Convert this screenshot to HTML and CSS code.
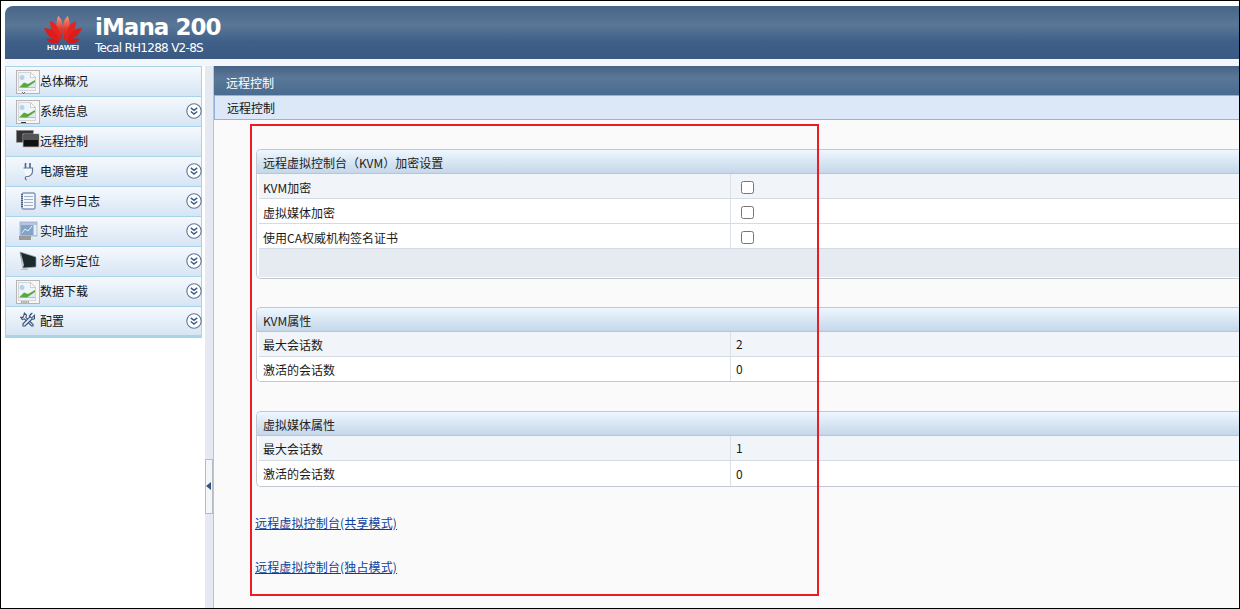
FILE: index.html
```html
<!DOCTYPE html>
<html lang="zh">
<head>
<meta charset="utf-8">
<title>iMana 200</title>
<link rel="stylesheet" href="styles.css">
</head>
<body>
<svg class="defs" width="0" height="0" aria-hidden="true">
  <defs>
    <linearGradient id="petal" x1="0" y1="0" x2="0" y2="1">
      <stop offset="0" stop-color="#f29a80"/>
      <stop offset=".55" stop-color="#e6362c"/>
      <stop offset="1" stop-color="#d9161a"/>
    </linearGradient>
  </defs>
  <symbol id="broken" viewBox="0 0 24 24">
    <rect x="0.5" y="0.5" width="23" height="23" fill="#f6f6f6" stroke="#b5b5b5"/>
    <path d="M2.500 2.500h12l5 5v13h-17z" fill="#eef4fb" stroke="#c4c8cc" stroke-width=".7"/>
    <path d="M14.500 2.500v5h5z" fill="#fff" stroke="#bbb" stroke-width=".7"/>
    <path d="M3 17.500l5-5 4 1.500 7-4v8z" fill="#5ca83a"/>
    <path d="M6 10a2.500 2.500 0 1 1 .1 0z" fill="#b8d0ec"/>
    <path d="M11 17.500l8-5.500v5.500z" fill="#dfe8ef"/>
  </symbol>
  <symbol id="chev" viewBox="0 0 16 16">
    <circle cx="8" cy="8" r="7.200" fill="#fff" stroke="#5d7699" stroke-width="1.100"/>
    <path d="M4.800 4.800L8 7.300l3.200-2.500M4.800 8.500L8 11l3.200-2.500" fill="none" stroke="#3d5a82" stroke-width="1.500"/>
  </symbol>
</svg>
<div class="frame">
  <header class="top">
    <svg class="logo" viewBox="0 0 40 37" width="40" height="37" aria-hidden="true">
      <g>
        <path d="M19 25C13 18 12 11 15 1c3 2 5 6 4.800 12-.1 4-.4 8-.8 12z" fill="url(#petal)"/>
        <path d="M18 25.500C12 22 7 16 7 6c4 1 7 4 8.500 9 1 3 2 7 2.500 10.500z" fill="#e3241f"/>
        <path d="M17 26C10 25.500 4 21 1 13c5 0 9 2 12 6 1.500 2 3 5 4 7z" fill="#dd1c1c"/>
        <path d="M16.500 27C11 30 6 28 3 24c5-1 10 0 13.500 3z" fill="#d9161a"/>
      </g>
      <g transform="translate(40 0) scale(-1 1)">
        <path d="M19 25C13 18 12 11 15 1c3 2 5 6 4.800 12-.1 4-.4 8-.8 12z" fill="url(#petal)"/>
        <path d="M18 25.500C12 22 7 16 7 6c4 1 7 4 8.500 9 1 3 2 7 2.500 10.500z" fill="#e3241f"/>
        <path d="M17 26C10 25.500 4 21 1 13c5 0 9 2 12 6 1.500 2 3 5 4 7z" fill="#dd1c1c"/>
        <path d="M16.500 27C11 30 6 28 3 24c5-1 10 0 13.500 3z" fill="#d9161a"/>
      </g>
      <text x="20" y="35" class="logo-text" text-anchor="middle">HUAWEI</text>
    </svg>
    <div class="brand">
      <h1 class="brand-name">iMana 200</h1>
      <p class="brand-model">Tecal RH1288 V2-8S</p>
    </div>
  </header>
  <div class="main">
    <nav class="side">
      <a class="nav-item"><span class="ico"><svg class="ico-svg" viewBox="0 0 24 24"><use href="#broken"/><path d="M6 22l1.500 1.500L9 22" fill="none" stroke="#444" stroke-width=".8"/></svg></span><span class="nav-text">总体概况</span></a>
      <a class="nav-item"><span class="ico"><svg class="ico-svg" viewBox="0 0 24 24"><use href="#broken"/><path d="M5 22.500h5" fill="none" stroke="#333"/></svg></span><span class="nav-text">系统信息</span><svg class="chev"><use href="#chev"/></svg></a>
      <a class="nav-item"><span class="ico"><svg class="ico-svg" viewBox="0 0 24 24"><rect x=".3" y=".3" width="17" height="12" fill="#333" stroke="#999" stroke-width=".6"/><rect x="7" y="4" width="16" height="13" fill="#111" stroke="#bbb" stroke-width=".8"/><path d="M8 5h14v5H8z" fill="#555"/><path d="M11 18h8l2 3H9z" fill="#e4e6ee"/></svg></span><span class="nav-text">远程控制</span></a>
      <a class="nav-item"><span class="ico"><svg class="ico-svg" viewBox="0 0 24 24"><path d="M9.500 3v5M14 3v5" fill="none" stroke="#4b6588" stroke-width="1.600"/><path d="M7.500 8h9v3.500c0 3-3 5-5 5h-.5c-1.200 0-1.800 1-1.800 1.800s.6 1.500 1.600 1.700" fill="#f4f7fb" stroke="#5d7699" stroke-width="1.200"/></svg></span><span class="nav-text">电源管理</span><svg class="chev"><use href="#chev"/></svg></a>
      <a class="nav-item"><span class="ico"><svg class="ico-svg" viewBox="0 0 24 24"><rect x="6" y="3" width="13" height="16" rx="1" fill="#f4f7fb" stroke="#4e6c92"/><path d="M8 6.500h9M8 9.500h9M8 12.500h9M8 15.500h9" stroke="#9fb1c8"/><path d="M6 4v14" stroke="#2f4a6e" stroke-width="1.600" stroke-dasharray="1 1"/></svg></span><span class="nav-text">事件与日志</span><svg class="chev"><use href="#chev"/></svg></a>
      <a class="nav-item"><span class="ico"><svg class="ico-svg" viewBox="0 0 24 24"><rect x="4" y="2" width="17" height="14" fill="#b9c4de" stroke="#8f9dbb" stroke-width=".6"/><rect x="5" y="5" width="12" height="10" fill="#7fa4c8"/><path d="M6 13l3-4 3 2 4-5" fill="none" stroke="#e8f0f8"/><path d="M3 16h12v4H3z" fill="#9a9a9a"/><rect x="18" y="5" width="2.500" height="10" fill="#e8eef8"/></svg></span><span class="nav-text">实时监控</span><svg class="chev"><use href="#chev"/></svg></a>
      <a class="nav-item"><span class="ico"><svg class="ico-svg" viewBox="0 0 24 24"><path d="M4 2l16 5v10l-13 1z" fill="#1d2a2c" stroke="#9aa6ae" stroke-width=".7"/><path d="M5 3l3 12-2 4z" fill="#bcc6cc"/><path d="M5 19l6-1 1 2H5z" fill="#b9c0c6"/></svg></span><span class="nav-text">诊断与定位</span><svg class="chev"><use href="#chev"/></svg></a>
      <a class="nav-item"><span class="ico"><svg class="ico-svg" viewBox="0 0 24 24"><use href="#broken"/><path d="M5 22h8" fill="none" stroke="#555" stroke-width="1.200" stroke-dasharray="1.500 .7"/></svg></span><span class="nav-text">数据下载</span><svg class="chev"><use href="#chev"/></svg></a>
      <a class="nav-item nav-last"><span class="ico"><svg class="ico-svg" viewBox="0 0 24 24"><g transform="translate(12 10.500) scale(.72) translate(-12 -12)"><path d="M7 3l3 3-1 3 10 10v2h-2L7 11l-3 1-2-3h3l1-2z" fill="#f2f5fa" stroke="#34527a" stroke-width="1.500"/><path d="M18 3l-4 4 3 3 4-4v5l-4 1-9 9H5v-3l9-9 1-4z" fill="#dfe6f0" stroke="#34527a" stroke-width="1.500"/></g></svg></span><span class="nav-text">配置</span><svg class="chev"><use href="#chev"/></svg></a>
    </nav>
    <div class="splitter"><span class="handle"><span class="arrow"></span></span></div>
    <section class="content">
      <div class="title-bar">远程控制</div>
      <div class="crumb">远程控制</div>
      <div class="body">
        <div class="panel panel-first">
          <div class="panel-head">远程虚拟控制台（KVM）加密设置</div>
          <div class="row"><span class="label">KVM加密</span><span class="value"><span class="check"></span></span></div>
          <div class="row"><span class="label">虚拟媒体加密</span><span class="value"><span class="check"></span></span></div>
          <div class="row"><span class="label">使用CA权威机构签名证书</span><span class="value"><span class="check"></span></span></div>
          <div class="panel-foot"></div>
        </div>
        <div class="panel panel-kvm">
          <div class="panel-head">KVM属性</div>
          <div class="row"><span class="label">最大会话数</span><span class="value">2</span></div>
          <div class="row"><span class="label">激活的会话数</span><span class="value">0</span></div>
        </div>
        <div class="panel panel-media">
          <div class="panel-head">虚拟媒体属性</div>
          <div class="row"><span class="label">最大会话数</span><span class="value">1</span></div>
          <div class="row"><span class="label">激活的会话数</span><span class="value">0</span></div>
        </div>
        <p class="link-line link-first"><a href="#">远程虚拟控制台(共享模式)</a></p>
        <p class="link-line link-second"><a href="#">远程虚拟控制台(独占模式)</a></p>
      </div>
    </section>
  </div>
  <div class="redbox"></div>
</div>
</body>
</html>
```
FILE: styles.css
```css
* { box-sizing: border-box; }
html, body { margin: 0; padding: 0; }
body {
  width: 1240px;
  height: 609px;
  overflow: hidden;
  font-family: "Noto Sans CJK SC", "Noto Sans", sans-serif;
  font-size: 12px;
  color: #1a1a1a;
  background: #fff;
}
.defs { position: absolute; }
.frame {
  position: relative;
  width: 1240px;
  height: 609px;
  border: 1px solid #000;
  padding: 5px 0 0 4px;
  background: #fff;
  display: flex;
  flex-direction: column;
}
.top {
  height: 53px;
  flex: none;
  border-top-left-radius: 8px;
  background: linear-gradient(#486487 0, #5a7797 36%, #3e5f88 68%, #3a5a83 100%);
  display: flex;
  align-items: flex-start;
  padding: 8px 0 0 38px;
}
.logo { display: block; margin-top: 1px; flex: none; }
.logo-text { font: bold 8px "Liberation Sans", sans-serif; fill: #fff; }
.brand { margin-left: 12px; color: #fff; }
.brand-name {
  margin: 0;
  font: bold 23px/26px "DejaVu Sans", sans-serif;
  letter-spacing: -.95px;
  color: #fff;
}
.brand-model {
  margin: 1px 0 0;
  font: 12px/14px "DejaVu Sans", sans-serif;
  letter-spacing: -.72px;
  color: #fff;
}
.main {
  flex: 1;
  min-height: 0;
  padding-top: 7px;
  display: flex;
  background: #f3f6fb;
}
.side { width: 197px; flex: none; background: #fff; align-self: stretch; }
.nav-item {
  display: flex;
  align-items: center;
  height: 30px;
  border: 1px solid #a9d3e9;
  border-bottom: 0;
  background: linear-gradient(#f6f9fd, #d6e5f4);
  position: relative;
  color: #111;
}
.nav-last { border-bottom: 3px solid #a9d3e9; height: 32px; }
.ico { width: 24px; height: 24px; margin-left: 10px; flex: none; display: block; }
.ico-svg { display: block; width: 24px; height: 24px; }
.nav-text { margin-top: -2px; line-height: 16px; }
.nav-last .nav-text { margin-top: 0; }
.chev { position: absolute; right: -1px; top: 6px; width: 16px; height: 16px; }
.splitter {
  width: 12px;
  flex: none;
  position: relative;
  background: linear-gradient(90deg, #fff 0, #fff 3px, #e4e9f2 3px, #e4e9f2 11px, #b9c4d3 11px);
}
.handle {
  position: absolute;
  left: 3px;
  top: 393px;
  width: 8px;
  height: 55px;
  background: #f3f5f9;
  border: 1px solid #b6bcc5;
}
.arrow {
  position: absolute;
  left: 0;
  top: 22px;
  border: 4px solid transparent;
  border-left-width: 0;
  border-right: 5px solid #33557f;
}
.content { flex: 1; min-width: 0; background: #fafafa; display: flex; flex-direction: column; }
.title-bar {
  height: 29px;
  flex: none;
  color: #fff;
  padding: 9px 0 0 12px;
  line-height: 16px;
  background: linear-gradient(#466385, #5a7797 40%, #4a6b90);
}
.crumb {
  height: 25px;
  flex: none;
  background: #dce8f8;
  border: 1px solid #93b2dc;
  border-right: 0;
  padding: 4px 0 0 12px;
  line-height: 16px;
  color: #111;
}
.body { flex: 1; min-height: 0; padding: 29px 0 0 42px; }
.panel {
  background: #fff;
  border: 1px solid #c2c8cf;
  border-right: 0;
  border-radius: 5px 0 0 5px;
}
.panel-kvm { margin-top: 28px; }
.panel-media { margin-top: 29px; }
.panel-head {
  height: 24px;
  padding: 5px 0 0 6px;
  line-height: 16px;
  background: linear-gradient(#eef7ff, #c4d7e9);
  border-bottom: 1px solid #b4c6da;
  border-radius: 4px 0 0 0;
  color: #222;
}
.row {
  display: flex;
  height: 25px;
  margin-left: 2px;
  border-bottom: 1px solid #d3dbe5;
  background: #fff;
  line-height: 26px;
}
.panel-first .row { line-height: 28px; }
.panel-head + .row { background: #f1f5f9; }
.panel-kvm .row:last-child { border-bottom: 0; height: 24px; }
.panel-media .row:last-child { border-bottom: 0; }
.label { width: 471px; flex: none; padding-left: 4px; }
.value { flex: 1; border-left: 1px solid #d9e0e8; padding-left: 5px; display: flex; align-items: center; }
.check {
  display: block;
  width: 13px;
  height: 13px;
  margin: 3px 0 0 5px;
  background: #fff;
  border: 1px solid #767676;
  border-radius: 2.500px;
}
.panel-foot { height: 28px; margin-left: 2px; margin-bottom: 1px; background: #e6ebf2; }
.link-line { margin: 28px 0 0 -1px; line-height: 16px; }
.link-line a { color: #0c3f9c; text-decoration: underline; letter-spacing: .15px; }
.redbox {
  position: absolute;
  left: 249px;
  top: 123px;
  width: 569px;
  height: 472px;
  border: 2px solid #ed1c24;
  pointer-events: none;
}
```
